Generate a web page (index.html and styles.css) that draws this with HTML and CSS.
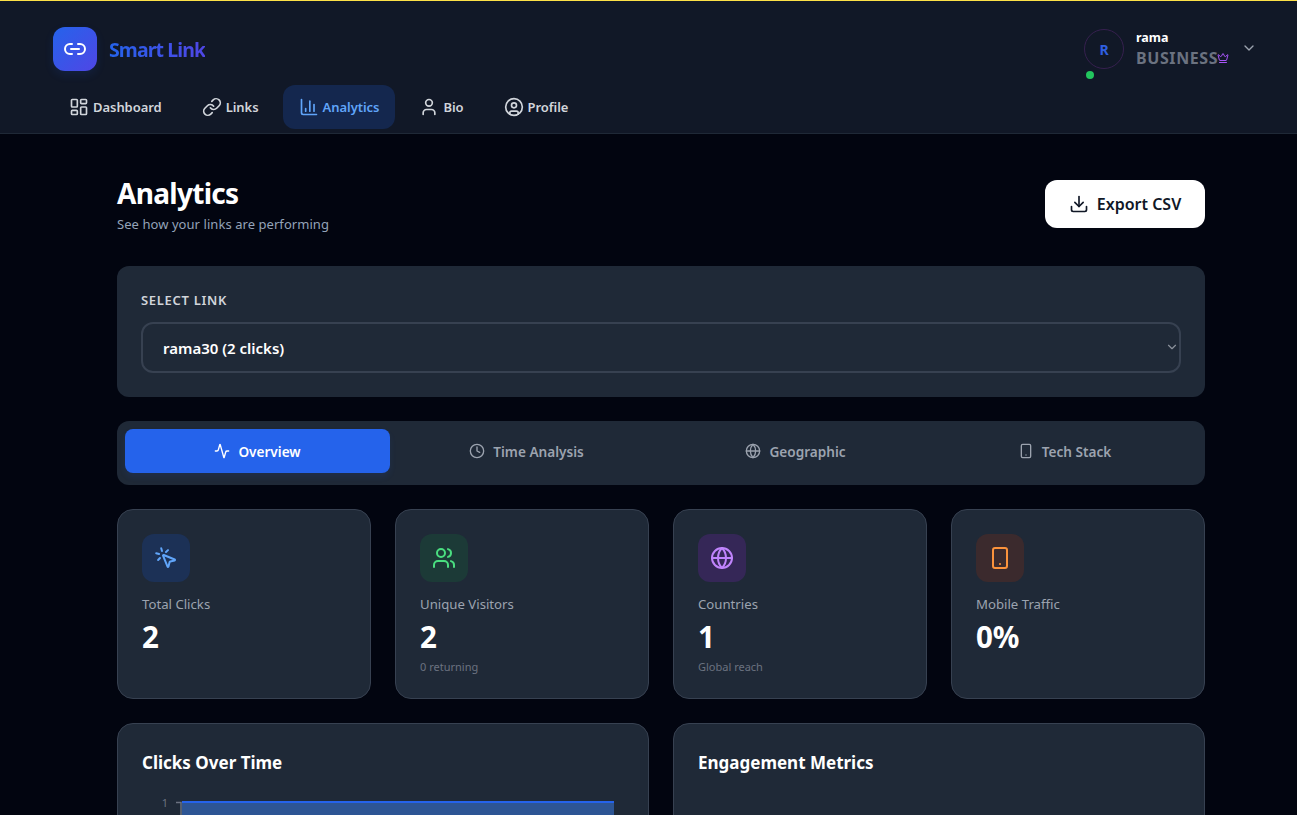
FILE: index.html
```html
<!DOCTYPE html>
<html lang="en">
<head>
<meta charset="utf-8">
<title>Analytics - Smart Link</title>
<link rel="stylesheet" href="styles.css">
</head>
<body>
<header class="topbar">
  <div class="brand-row">
    <div class="brand">
      <span class="logo"><svg class="ic" width="24" height="24" viewBox="0 0 24 24"><path d="M9 17H7A5 5 0 0 1 7 7h2"/><path d="M15 7h2a5 5 0 1 1 0 10h-2"/><line x1="8" y1="12" x2="16" y2="12"/></svg></span>
      <span class="brand-name">Smart Link</span>
    </div>
    <div class="user">
      <span class="avatar">R<span class="dot"></span></span>
      <span class="user-text">
        <span class="user-name">rama</span>
        <span class="plan">BUSINESS<svg class="ic crown" width="12" height="12" viewBox="0 0 24 24"><path d="M11.562 3.266a.5.5 0 0 1 .876 0L15.39 8.87a1 1 0 0 0 1.516.294L21.183 5.5a.5.5 0 0 1 .798.519l-2.834 10.246a1 1 0 0 1-.956.734H5.81a1 1 0 0 1-.957-.734L2.02 6.02a.5.5 0 0 1 .798-.519l4.276 3.664a1 1 0 0 0 1.516-.294z"/><path d="M5 21h14"/></svg></span>
      </span>
      <svg class="ic chev" width="16" height="16" viewBox="0 0 24 24"><path d="m6 9 6 6 6-6"/></svg>
    </div>
  </div>
  <nav class="nav">
    <a class="nav-item"><svg class="ic" width="20" height="20" viewBox="0 0 24 24"><rect x="3" y="3" width="7" height="9" rx="1"/><rect x="14" y="3" width="7" height="5" rx="1"/><rect x="14" y="12" width="7" height="9" rx="1"/><rect x="3" y="16" width="7" height="5" rx="1"/></svg>Dashboard</a>
    <a class="nav-item"><svg class="ic" width="20" height="20" viewBox="0 0 24 24"><path d="M10 13a5 5 0 0 0 7.54.54l3-3a5 5 0 0 0-7.07-7.07l-1.72 1.71"/><path d="M14 11a5 5 0 0 0-7.54-.54l-3 3a5 5 0 0 0 7.07 7.07l1.71-1.71"/></svg>Links</a>
    <a class="nav-item active"><svg class="ic" width="20" height="20" viewBox="0 0 24 24"><path d="M3 3v16a2 2 0 0 0 2 2h16"/><path d="M18 17V9"/><path d="M13 17V5"/><path d="M8 17v-3"/></svg>Analytics</a>
    <a class="nav-item"><svg class="ic" width="20" height="20" viewBox="0 0 24 24"><path d="M19 21v-2a4 4 0 0 0-4-4H9a4 4 0 0 0-4 4v2"/><circle cx="12" cy="7" r="4"/></svg>Bio</a>
    <a class="nav-item"><svg class="ic" width="20" height="20" viewBox="0 0 24 24"><circle cx="12" cy="12" r="10"/><circle cx="12" cy="10" r="3"/><path d="M7 20.662V19a2 2 0 0 1 2-2h6a2 2 0 0 1 2 2v1.662"/></svg>Profile</a>
  </nav>
</header>

<main class="main">
  <div class="page-head">
    <div>
      <h1 class="title">Analytics</h1>
      <p class="subtitle">See how your links are performing</p>
    </div>
    <button class="export"><svg class="ic" width="20" height="20" viewBox="0 0 24 24"><path d="M21 15v4a2 2 0 0 1-2 2H5a2 2 0 0 1-2-2v-4"/><polyline points="7 10 12 15 17 10"/><line x1="12" y1="15" x2="12" y2="3"/></svg>Export CSV</button>
  </div>

  <section class="panel select-panel">
    <label class="select-label" for="link">SELECT LINK</label>
    <div class="select-wrap">
      <select class="select" id="link"><option>rama30 (2 clicks)</option></select>
      <svg class="ic select-arrow" width="14" height="14" viewBox="0 0 24 24"><path d="m6 9 6 6 6-6"/></svg>
    </div>
  </section>

  <div class="panel tabs">
    <button class="tab active"><svg class="ic" width="16" height="16" viewBox="0 0 24 24"><path d="M22 12h-2.48a2 2 0 0 0-1.93 1.46l-2.35 8.36a.25.25 0 0 1-.48 0L9.24 2.18a.25.25 0 0 0-.48 0l-2.35 8.36A2 2 0 0 1 4.49 12H2"/></svg>Overview</button>
    <button class="tab"><svg class="ic" width="16" height="16" viewBox="0 0 24 24"><circle cx="12" cy="12" r="10"/><polyline points="12 6 12 12 16 14"/></svg>Time Analysis</button>
    <button class="tab"><svg class="ic" width="16" height="16" viewBox="0 0 24 24"><circle cx="12" cy="12" r="10"/><path d="M12 2a14.5 14.5 0 0 0 0 20 14.5 14.5 0 0 0 0-20"/><path d="M2 12h20"/></svg>Geographic</button>
    <button class="tab"><svg class="ic" width="16" height="16" viewBox="0 0 24 24"><rect x="5" y="2" width="14" height="20" rx="2"/><path d="M12 18h.01"/></svg>Tech Stack</button>
  </div>

  <div class="stats">
    <article class="card stat">
      <span class="stat-icon blue"><svg class="ic" width="24" height="24" viewBox="0 0 24 24"><path d="M14 4.1 12 6"/><path d="m5.1 8-2.9-.8"/><path d="m6 12-1.9 2"/><path d="M7.2 2.2 8 5.1"/><path d="M9.037 9.69a.498.498 0 0 1 .653-.653l11 4.5a.5.5 0 0 1-.074.949l-4.349 1.041a1 1 0 0 0-.74.739l-1.04 4.35a.5.5 0 0 1-.95.074z"/></svg></span>
      <div class="stat-label">Total Clicks</div>
      <div class="stat-value">2</div>
    </article>
    <article class="card stat">
      <span class="stat-icon green"><svg class="ic" width="24" height="24" viewBox="0 0 24 24"><path d="M16 21v-2a4 4 0 0 0-4-4H6a4 4 0 0 0-4 4v2"/><circle cx="9" cy="7" r="4"/><path d="M22 21v-2a4 4 0 0 0-3-3.87"/><path d="M16 3.13a4 4 0 0 1 0 7.75"/></svg></span>
      <div class="stat-label">Unique Visitors</div>
      <div class="stat-value">2</div>
      <div class="stat-sub">0 returning</div>
    </article>
    <article class="card stat">
      <span class="stat-icon purple"><svg class="ic" width="24" height="24" viewBox="0 0 24 24"><circle cx="12" cy="12" r="10"/><path d="M12 2a14.5 14.5 0 0 0 0 20 14.5 14.5 0 0 0 0-20"/><path d="M2 12h20"/></svg></span>
      <div class="stat-label">Countries</div>
      <div class="stat-value">1</div>
      <div class="stat-sub">Global reach</div>
    </article>
    <article class="card stat">
      <span class="stat-icon orange"><svg class="ic" width="24" height="24" viewBox="0 0 24 24"><rect x="5" y="2" width="14" height="20" rx="2"/><path d="M12 18h.01"/></svg></span>
      <div class="stat-label">Mobile Traffic</div>
      <div class="stat-value">0%</div>
    </article>
  </div>

  <div class="charts">
    <section class="card chart-card">
      <h2 class="chart-title">Clicks Over Time</h2>
      <div class="chart">
        <svg class="chart-svg" width="482" height="210" viewBox="0 -10 482 210">
          <text class="axis-text" x="26" y="6" text-anchor="end">1</text>
          <path class="axis" d="M34 1.5h5v200"/>
          <rect class="bar" x="40" y="1" width="432" height="199"/>
          <path class="bar-top" d="M40 1h432"/>
        </svg>
      </div>
    </section>
    <section class="card chart-card">
      <h2 class="chart-title">Engagement Metrics</h2>
    </section>
  </div>
</main>
</body>
</html>
```
FILE: styles.css
```css
* { box-sizing: border-box; }
html, body { height: 815px; overflow: hidden; }
body {
  margin: 0;
  background: #020510;
  color: #fff;
  font-family: "Noto Sans", "Open Sans", sans-serif;
}
.ic {
  fill: none;
  stroke: currentColor;
  stroke-width: 2;
  stroke-linecap: round;
  stroke-linejoin: round;
  flex: none;
}

/* Header */
.topbar {
  height: 134px;
  background: #111827;
  border-top: 1px solid #fde047;
  border-bottom: 1px solid #1f2937;
  padding: 26px 40px 0 53px;
}
.brand-row {
  display: flex;
  justify-content: space-between;
  align-items: flex-start;
}
.brand { display: flex; align-items: center; gap: 12px; }
.logo {
  width: 44px;
  height: 44px;
  border-radius: 12px;
  background: linear-gradient(135deg, #2563eb, #4f46e5);
  display: flex;
  align-items: center;
  justify-content: center;
  color: #fff;
  box-shadow: 0 4px 10px rgba(37, 99, 235, .12);
}
.brand-name {
  font-size: 19.5px;
  font-weight: 700;
  letter-spacing: -.9px;
  background: linear-gradient(90deg, #2563eb, #4f46e5);
  -webkit-background-clip: text;
  background-clip: text;
  color: transparent;
}
.user { display: flex; align-items: center; padding-top: 2px; }
.avatar {
  position: relative;
  width: 40px;
  height: 40px;
  border-radius: 50%;
  border: 1px solid #36204f;
  color: #2f5fe0;
  font-size: 14px;
  font-weight: 700;
  display: flex;
  align-items: center;
  justify-content: center;
  margin-right: 12px;
}
.dot {
  position: absolute;
  left: 1px;
  bottom: -11px;
  width: 8px;
  height: 8px;
  border-radius: 50%;
  background: #22c55e;
}
.user-text { display: flex; flex-direction: column; width: 105px; margin-top: -1px; }
.user-name { font-size: 12.5px; line-height: 16px; font-weight: 700; }
.plan {
  display: flex;
  align-items: center;
  font-size: 16px;
  line-height: 20px;
  font-weight: 700;
  letter-spacing: .6px;
  color: #6b7280;
  margin-top: 2px;
}
.crown { color: #a855f7; margin-left: -1px; }
.chev { color: #9ca3af; margin-top: -2px; }

.nav { display: flex; gap: 8px; margin-top: 14px; }
.nav-item {
  display: flex;
  align-items: center;
  gap: 4px;
  height: 44px;
  padding: 0 16px;
  border-radius: 12px;
  font-size: 13px;
  font-weight: 600;
  letter-spacing: -.05px;
  color: #d1d5db;
}
.nav-item.active { background: #14274e; color: #60a5fa; }

/* Main */
.main { width: 1088px; margin-left: 117px; padding-top: 45px; }
.page-head { display: flex; justify-content: space-between; align-items: flex-start; }
.title {
  margin: 0;
  font-size: 28px;
  line-height: 28px;
  font-weight: 700;
  letter-spacing: -.7px;
}
.subtitle { margin: 7px 0 0; font-size: 13px; line-height: 20px; letter-spacing: .06px; color: #94a3b8; }
.export {
  width: 160px;
  height: 48px;
  border: 0;
  border-radius: 12px;
  background: #fff;
  color: #111827;
  font-family: inherit;
  font-size: 16px;
  font-weight: 600;
  display: flex;
  align-items: center;
  justify-content: center;
  gap: 8px;
  margin-top: 1px;
}

.panel { background: #1f2937; border-radius: 12px; }
.select-panel { margin-top: 32px; padding: 24px; height: 131px; }
.select-label {
  display: block;
  font-size: 13px;
  line-height: 20px;
  font-weight: 600;
  letter-spacing: .7px;
  color: #d1d5db;
}
.select-wrap { position: relative; margin-top: 12px; }
.select {
  display: block;
  width: 100%;
  height: 51px;
  padding: 0 32px 0 20px;
  appearance: none;
  background: #1f2937;
  color: #fff;
  border: 2px solid #374151;
  border-radius: 12px;
  font-family: inherit;
  font-size: 15px;
  font-weight: 600;
}
.select-arrow {
  position: absolute;
  right: 2px;
  top: 18px;
  color: #8b919c;
  pointer-events: none;
}

.tabs {
  margin-top: 24px;
  padding: 8px;
  height: 64px;
  display: grid;
  grid-template-columns: repeat(4, 1fr);
  align-items: start;
  gap: 4px;
}
.tab {
  height: 44px;
  border: 0;
  border-radius: 8px;
  background: transparent;
  color: #9ca3af;
  font-family: inherit;
  font-size: 13.6px;
  font-weight: 600;
  display: flex;
  align-items: center;
  justify-content: center;
  gap: 8px;
}
.tab.active { background: #2563eb; color: #fff; box-shadow: 0 4px 6px rgba(37, 99, 235, .1); }

.card { background: #1f2937; border: 1px solid #374151; border-radius: 16px; }
.stats {
  margin-top: 24px;
  display: grid;
  grid-template-columns: repeat(4, 1fr);
  gap: 24px;
}
.stat { height: 190px; padding: 24px; }
.stat-icon {
  display: flex;
  width: 48px;
  height: 48px;
  border-radius: 12px;
  align-items: center;
  justify-content: center;
}
.blue { background: #1c3156; color: #60a5fa; }
.green { background: #1c3a37; color: #4ade80; }
.purple { background: #352757; color: #c084fc; }
.orange { background: #3b2a2d; color: #fb923c; }
.stat-label { margin-top: 12px; font-size: 13.2px; line-height: 20px; color: #9ca3af; }
.stat-value { margin-top: 6px; font-size: 29.5px; line-height: 34px; font-weight: 700; }
.stat-sub { margin-top: 5px; font-size: 11px; line-height: 16px; color: #6b7280; }

.charts {
  margin-top: 24px;
  display: grid;
  grid-template-columns: repeat(2, 1fr);
  gap: 24px;
}
.chart-card { height: 400px; padding: 24px; }
.chart-title { margin: 1px 0 0; font-size: 17px; line-height: 28px; font-weight: 700; }
.chart { margin-top: 14px; }
.chart-svg { display: block; }
.axis-text { font-family: "Noto Sans", sans-serif; font-size: 11px; fill: #6b7280; }
.axis { fill: none; stroke: #6b7280; stroke-width: 1.5; }
.bar { fill: #2d5594; }
.bar-top { stroke: #2563eb; stroke-width: 2; fill: none; }
```
